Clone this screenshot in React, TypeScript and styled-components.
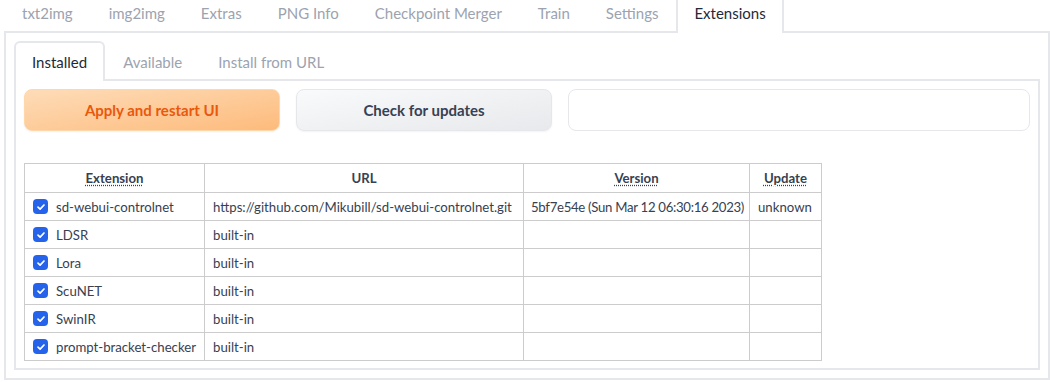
import React from "react";
import styled, { createGlobalStyle, css } from "styled-components";

const GlobalStyle = createGlobalStyle`
  html, body {
    margin: 0;
    padding: 0;
    background: #fff;
    font-family: Lato, "Liberation Sans", sans-serif;
    color: #1f2937;
    overflow: hidden;
  }
`;

const Page = styled.div`
  padding-left: 4px;
  width: 1050px;
  box-sizing: border-box;
`;

const TabBar = styled.div<{ $inner?: boolean }>`
  display: flex;
  position: relative;
  z-index: 1;
  ${(p) =>
    p.$inner
      ? css`
          height: 38px;
        `
      : css`
          margin-top: -6px;
          height: 37px;
        `}
`;

const Tab = styled.div<{ $active?: boolean; $inner?: boolean }>`
  display: flex;
  align-items: center;
  box-sizing: border-box;
  padding: ${(p) => (p.$inner ? "0 16px" : "0 16px 3px")};
  font-size: 15px;
  color: ${(p) => (p.$active ? "#1f2937" : "#9ca3af")};
  border: 2px solid transparent;
  border-bottom: none;
  white-space: nowrap;
  height: ${(p) => (p.$inner ? "40px" : "39px")};
  ${(p) =>
    p.$active &&
    css`
      background: #fff;
      border-color: #e5e7eb;
    `}
  ${(p) =>
    p.$inner &&
    css`
      border-radius: 6px 6px 0 0;
    `}
`;

const Panel = styled.div<{ $inner?: boolean }>`
  border: 2px solid #e5e7eb;
  padding: 8px;
  box-sizing: border-box;
  background: #fff;
  ${(p) =>
    p.$inner
      ? css`
          height: 291px;
        `
      : css`
          width: 1046px;
          height: 349px;
        `}
`;

const ButtonRow = styled.div`
  display: grid;
  grid-template-columns: 256px 256px 1fr;
  gap: 16px;
  height: 42px;
`;

const Button = styled.button<{ $primary?: boolean }>`
  font-family: inherit;
  font-size: 15px;
  font-weight: 700;
  border-radius: 8px;
  cursor: pointer;
  ${(p) =>
    p.$primary
      ? css`
          color: #ea580c;
          border: 1px solid #fed7aa;
          background: linear-gradient(to bottom right, #fedcb8, #fdbb7c);
        `
      : css`
          color: #374151;
          border: 1px solid #e5e7eb;
          background: linear-gradient(to bottom right, #f9fafb, #e8e9ec);
        `}
  box-shadow: 0 1px 2px rgba(0, 0, 0, 0.05);
`;

const TextBox = styled.div`
  border: 1px solid #e5e7eb;
  border-radius: 8px;
  background: #fff;
`;

const Table = styled.table`
  margin-top: 32px;
  border-collapse: collapse;
  table-layout: fixed;
  width: 797px;
  font-size: 13.2px;
  color: #374151;
`;

const Th = styled.th`
  border: 1px solid #ccc;
  height: 28px;
  padding: 0 8px;
  font-weight: 700;
  text-align: center;
  color: #374151;
`;

const Abbr = styled.abbr`
  text-decoration: underline dotted;
  text-underline-offset: 2px;
`;

const Td = styled.td<{ $tight?: boolean }>`
  border: 1px solid #ccc;
  height: 27px;
  padding: ${(p) => (p.$tight ? "0 4px 0 7px" : "0 7px 0 8px")};
  letter-spacing: ${(p) => (p.$tight ? "-0.3px" : "normal")};
  white-space: nowrap;
  overflow: hidden;
`;

const NameCell = styled.label`
  display: flex;
  align-items: center;
  gap: 8px;
`;

const Check = styled.span`
  display: inline-flex;
  align-items: center;
  justify-content: center;
  width: 15px;
  height: 15px;
  border-radius: 4px;
  background: #2563eb;
  flex: none;
`;

const topTabs = [
  "txt2img",
  "img2img",
  "Extras",
  "PNG Info",
  "Checkpoint Merger",
  "Train",
  "Settings",
  "Extensions",
];

const innerTabs = ["Installed", "Available", "Install from URL"];

const extensions = [
  {
    name: "sd-webui-controlnet",
    url: "https://github.com/Mikubill/sd-webui-controlnet.git",
    version: "5bf7e54e (Sun Mar 12 06:30:16 2023)",
    update: "unknown",
  },
  { name: "LDSR", url: "built-in", version: "", update: "" },
  { name: "Lora", url: "built-in", version: "", update: "" },
  { name: "ScuNET", url: "built-in", version: "", update: "" },
  { name: "SwinIR", url: "built-in", version: "", update: "" },
  { name: "prompt-bracket-checker", url: "built-in", version: "", update: "" },
];

const CheckIcon = () => (
  <svg width="10" height="10" viewBox="0 0 10 10">
    <path
      d="M2 5.2 L4.1 7.2 L8 3"
      fill="none"
      stroke="#fff"
      strokeWidth="1.7"
      strokeLinecap="round"
      strokeLinejoin="round"
    />
  </svg>
);

export default function App() {
  return (
    <Page>
      <GlobalStyle />
      <TabBar>
        {topTabs.map((t) => (
          <Tab key={t} $active={t === "Extensions"}>
            {t}
          </Tab>
        ))}
      </TabBar>
      <Panel>
        <TabBar $inner>
          {innerTabs.map((t) => (
            <Tab key={t} $inner $active={t === "Installed"}>
              {t}
            </Tab>
          ))}
        </TabBar>
        <Panel $inner>
          <ButtonRow>
            <Button $primary>Apply and restart UI</Button>
            <Button>Check for updates</Button>
            <TextBox />
          </ButtonRow>
          <Table>
            <colgroup>
              <col style={{ width: 180 }} />
              <col style={{ width: 319 }} />
              <col style={{ width: 226 }} />
              <col style={{ width: 72 }} />
            </colgroup>
            <thead>
              <tr>
                <Th>
                  <Abbr>Extension</Abbr>
                </Th>
                <Th>URL</Th>
                <Th>
                  <Abbr>Version</Abbr>
                </Th>
                <Th>
                  <Abbr>Update</Abbr>
                </Th>
              </tr>
            </thead>
            <tbody>
              {extensions.map((e) => (
                <tr key={e.name}>
                  <Td>
                    <NameCell>
                      <Check>
                        <CheckIcon />
                      </Check>
                      {e.name}
                    </NameCell>
                  </Td>
                  <Td>{e.url}</Td>
                  <Td $tight>{e.version}</Td>
                  <Td>{e.update}</Td>
                </tr>
              ))}
            </tbody>
          </Table>
        </Panel>
      </Panel>
    </Page>
  );
}
